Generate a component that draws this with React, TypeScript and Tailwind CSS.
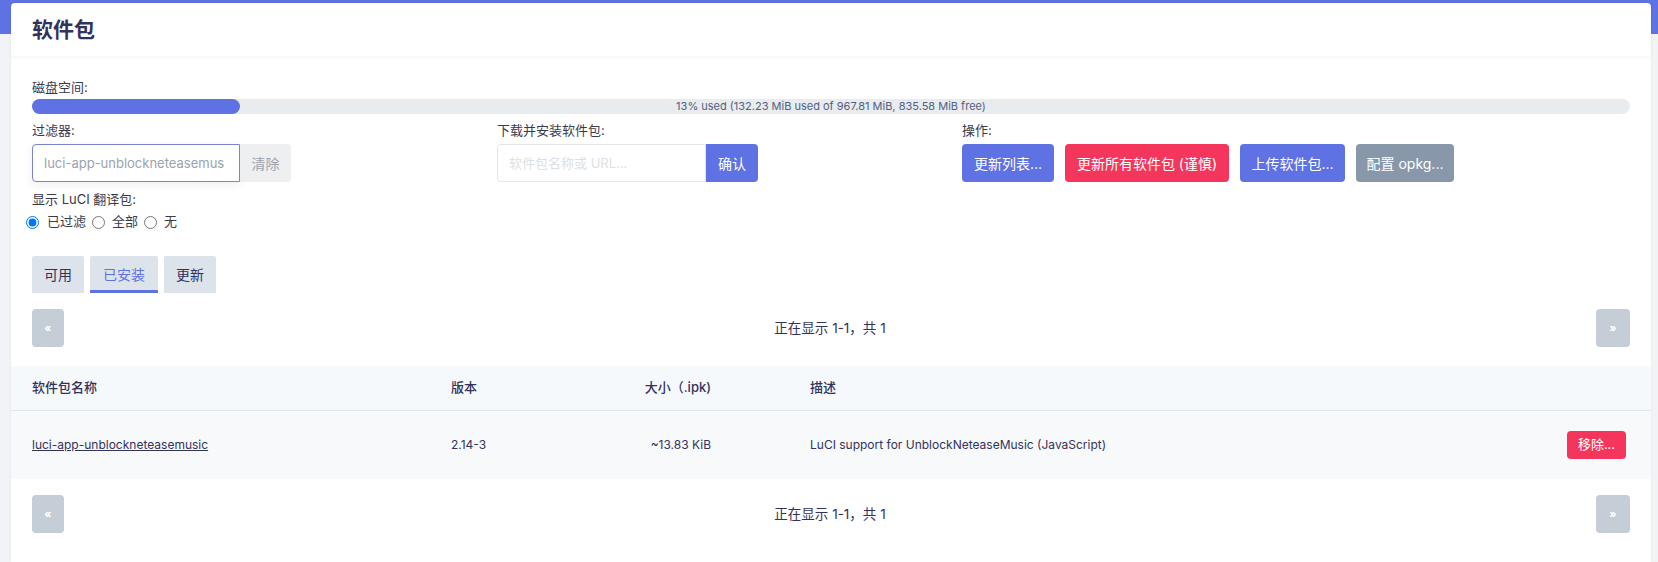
import React from 'react';

const font = "font-['Inter','Noto_Sans_CJK_SC',sans-serif]";

const Pager: React.FC = () => (
    <div className="flex items-center justify-between px-[21px]">
        <button className="w-[32px] h-[38px] rounded-[4px] bg-[#c5cdd7] text-white text-[11px] font-bold">«</button>
        <span className="text-[13.5px] text-[#32325d]">正在显示 1-1，共 1</span>
        <button className="w-[34px] h-[38px] rounded-[4px] bg-[#c5cdd7] text-white text-[11px] font-bold">»</button>
    </div>
);

export default function App() {
    const tabs = ['可用', '已安装', '更新'];
    return (
        <div className={`${font} h-[562px] overflow-hidden flex flex-col pt-[3px] pl-[11px] pr-[7px] bg-[linear-gradient(to_bottom,#5e72e4_34px,#f1f3f6_34px)]`}>
            <div className="flex-1 bg-white rounded-t-[4px] shadow-[0_0_2px_rgba(0,0,0,0.08)]">
                {/* Header */}
                <div className="h-[54px] flex items-center px-[21px] shadow-[0_2px_3px_rgba(0,0,0,0.025)] border-b border-[#f7f8fa]">
                    <h2 className="text-[21px] font-bold text-[#32325d]">软件包</h2>
                </div>

                <div className="px-[21px] pt-[20px]">
                    {/* Disk space */}
                    <div className="text-[13px] leading-5 text-[#3a3a4a]">磁盘空间:</div>
                    <div className="relative mt-[2px] h-[15px] rounded-full bg-[#e9ecef]">
                        <div className="h-full w-[13%] rounded-full bg-[#5e72e4]" />
                        <div className="absolute inset-0 flex items-center justify-center text-[11px] text-[#525f7f]">
                            13% used (132.23 MiB used of 967.81 MiB, 835.58 MiB free)
                        </div>
                    </div>

                    {/* Controls */}
                    <div className="grid grid-cols-[465px_465px_1fr] mt-[6px]">
                        <div>
                            <div className="text-[13px] leading-5 text-[#3a3a4a]">过滤器:</div>
                            <div className="flex mt-[4px]">
                                <input
                                    defaultValue="luci-app-unblockneteasemus"
                                    className="w-[208px] h-[38px] pl-[11px] pr-[2px] text-[13px] text-[#9aa3ad] border border-[#7c84d0] rounded-l-[4px] shadow-[0_3px_8px_rgba(50,50,93,0.08)] outline-none"
                                />
                                <button className="w-[51px] h-[38px] bg-[#eeeff1] text-[14px] text-[#9aa3ad] rounded-r-[4px]">清除</button>
                            </div>
                        </div>
                        <div>
                            <div className="text-[13px] leading-5 text-[#3a3a4a]">下载并安装软件包:</div>
                            <div className="flex mt-[4px]">
                                <input
                                    placeholder="软件包名称或 URL..."
                                    className="w-[209px] h-[38px] pl-[11px] text-[13px] border border-[#e3e6ea] rounded-l-[4px] outline-none placeholder:text-[#dcdfe3]"
                                />
                                <button className="w-[52px] h-[38px] bg-[#5e72e4] text-white text-[14px] rounded-r-[4px]">确认</button>
                            </div>
                        </div>
                        <div>
                            <div className="text-[13px] leading-5 text-[#3a3a4a]">操作:</div>
                            <div className="flex gap-[11px] mt-[4px]">
                                <button className="w-[92px] h-[38px] rounded-[4px] bg-[#5e72e4] text-white text-[14px]">更新列表...</button>
                                <button className="w-[164px] h-[38px] rounded-[4px] bg-[#f5365c] text-white text-[14px]">更新所有软件包 (谨慎)</button>
                                <button className="w-[105px] h-[38px] rounded-[4px] bg-[#5e72e4] text-white text-[14px]">上传软件包...</button>
                                <button className="w-[98px] h-[38px] rounded-[4px] bg-[#8898aa] text-white text-[14px]">配置 opkg...</button>
                            </div>
                        </div>
                    </div>

                    {/* Translation */}
                    <div className="mt-[7px] text-[13px] leading-5 text-[#3a3a4a]">显示 LuCI 翻译包:</div>
                    <div className="flex items-center h-[20px] mt-[3px] -ml-[6px] text-[13px] text-[#3a3a4a]">
                        <input type="radio" name="tr" defaultChecked className="m-0 w-[13px] h-[13px]" />
                        <span className="ml-[8px] mr-[6px]">已过滤</span>
                        <input type="radio" name="tr" className="m-0 w-[13px] h-[13px]" />
                        <span className="ml-[7px] mr-[6px]">全部</span>
                        <input type="radio" name="tr" className="m-0 w-[13px] h-[13px]" />
                        <span className="ml-[7px]">无</span>
                    </div>

                    {/* Tabs */}
                    <div className="flex gap-[6px] mt-[24px]">
                        {tabs.map((t) => (
                            <div
                                key={t}
                                className={
                                    t === '已安装'
                                        ? 'h-[37px] px-[13px] flex items-center bg-[#dde3ea] rounded-t-[2px] text-[14px] text-[#5e72e4] border-b-[3px] border-[#5e72e4] pt-[3px]'
                                        : 'h-[37px] px-[12px] flex items-center bg-[#dde3ea] rounded-t-[2px] text-[14px] text-[#32325d]'
                                }
                            >
                                {t}
                            </div>
                        ))}
                    </div>
                </div>

                <div className="mt-[16px]">
                    <Pager />
                </div>

                {/* Table */}
                <div className="mt-[19px] text-[12px] text-[#32325d]">
                    <div className="flex items-center h-[45px] bg-[#f6f9fc] border-b border-[#e2e5e9] font-medium text-[13px]">
                        <div className="w-[419px] pl-[21px]">软件包名称</div>
                        <div className="w-[150px] pl-[21px]">版本</div>
                        <div className="w-[152px] pr-[21px] text-right">大小（.ipk)</div>
                        <div className="flex-1 pl-[78px]">描述</div>
                    </div>
                    <div className="flex items-center h-[68px] bg-[#f8f9fa]">
                        <div className="w-[419px] pl-[21px]">
                            <a href="#" className="underline">luci-app-unblockneteasemusic</a>
                        </div>
                        <div className="w-[150px] pl-[21px]">2.14-3</div>
                        <div className="w-[152px] pr-[21px] text-right">~13.83 KiB</div>
                        <div className="flex-1 pl-[78px]">LuCI support for UnblockNeteaseMusic (JavaScript)</div>
                        <div className="pr-[25px]">
                            <button className="w-[59px] h-[28px] rounded-[4px] bg-[#f5365c] text-white text-[13px]">移除...</button>
                        </div>
                    </div>
                </div>

                <div className="mt-[16px]">
                    <Pager />
                </div>
            </div>
        </div>
    );
}
